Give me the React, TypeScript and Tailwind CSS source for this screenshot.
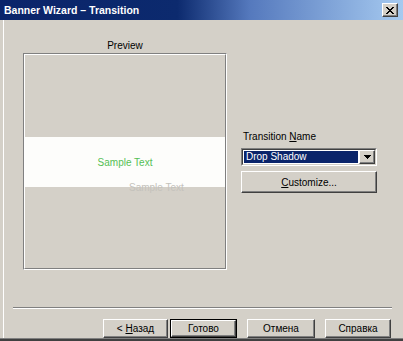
import React from "react";

function RaisedButton({
  children,
  className = "",
}: {
  children: React.ReactNode;
  className?: string;
}) {
  return (
    <div
      className={`flex items-center justify-center border border-t-white border-l-white border-r-[#404040] border-b-[#404040] shadow-[inset_-1px_-1px_0_#808080] bg-[#d4d0c8] ${className}`}
    >
      {children}
    </div>
  );
}

export default function App() {
  return (
    <div className="w-[403px] h-[341px] bg-[#d4d0c8] flex flex-col overflow-hidden font-['Liberation_Sans',Arial,sans-serif] text-[10px] text-black">
      {/* Title bar */}
      <div className="h-[20px] shrink-0 flex items-center pl-[4px] pr-[5px] bg-[linear-gradient(to_right,#0a246a_0%,#0c2a6e_44%,#5579bd_62%,#a6caf0_100%)]">
        <span className="flex-1 text-white font-bold text-[10.5px] leading-none">
          Banner Wizard – Transition
        </span>
        <RaisedButton className="w-[16px] h-[14px]">
          <svg width="8" height="7" viewBox="0 0 8 7" shapeRendering="crispEdges">
            <path
              d="M0 0h2v1h1v1h2V1h1V0h2v1H7v1H6v1H5v1h1v1h1v1h1v1H6V6H5V5H3v1H2v1H0V6h1V5h1V4h1V3H2V2H1V1H0z"
              fill="#000"
            />
          </svg>
        </RaisedButton>
      </div>

      {/* Body */}
      <div className="flex-1 flex flex-col shadow-[inset_3px_0_0_#d4d0c8,inset_4px_0_0_#fff]">
        <div className="flex pt-[19px] pl-[23px]">
          {/* Preview */}
          <div className="w-[204px] flex flex-col">
            <div className="h-[14px] leading-[14px] text-center">Preview</div>
            <div className="h-[217px] border border-t-[#808080] border-l-[#808080] border-r-white border-b-white">
              <div className="relative h-full border border-t-white border-l-white border-r-[#808080] border-b-[#808080] flex flex-col overflow-hidden">
                <div className="h-[82px] bg-[#d4d0c8]" />
                <div className="h-[50px] bg-[#fdfdfb] flex items-center justify-center text-[#55c055]">
                  Sample Text
                </div>
                <div className="flex-1 bg-[#d4d0c8]" />
                <div className="absolute left-[104px] top-[127px] text-[#c4c2bc] leading-[12px]">
                  Sample Text
                </div>
              </div>
            </div>
          </div>

          {/* Right column */}
          <div className="ml-[14px] w-[136px] pt-[91px] flex flex-col">
            <div className="h-[13px] leading-[13px] pl-[2px]">
              Transition <span className="underline">N</span>ame
            </div>
            <div className="mt-[5px] h-[18px] border border-t-[#808080] border-l-[#808080] border-r-white border-b-white">
              <div className="h-full flex border border-t-[#404040] border-l-[#404040] border-r-[#d4d0c8] border-b-[#d4d0c8] bg-white">
                <div className="flex-1 m-[1px] bg-[#0a246a] text-white leading-[12px] pl-[2px]">
                  Drop Shadow
                </div>
                <RaisedButton className="w-[16px] h-full">
                  <svg width="7" height="4" viewBox="0 0 7 4" shapeRendering="crispEdges">
                    <path d="M0 0h7v1H6v1H5v1H4v1H3V3H2V2H1V1H0z" fill="#000" />
                  </svg>
                </RaisedButton>
              </div>
            </div>
            <RaisedButton className="mt-[5px] h-[22px]">
              <span>
                <span className="underline">C</span>ustomize...
              </span>
            </RaisedButton>
          </div>
        </div>

        {/* Separator */}
        <div className="mt-[37px] ml-[13px] w-[379px] h-[2px] border-t border-t-[#808080] border-b border-b-white" />

        {/* Buttons */}
        <div className="mt-[10px] h-[19px] flex pl-[103px]">
          <RaisedButton className="w-[65px] h-full">
            <span>
              &lt; <span className="underline">Н</span>азад
            </span>
          </RaisedButton>
          <div className="ml-[2px] w-[67px] h-full border border-black">
            <RaisedButton className="w-full h-full">Готово</RaisedButton>
          </div>
          <RaisedButton className="ml-[10px] w-[68px] h-full">Отмена</RaisedButton>
          <RaisedButton className="ml-[10px] w-[66px] h-full">Справка</RaisedButton>
        </div>
      </div>

      {/* Bottom edge */}
      <div className="h-[3px] shrink-0 border-t border-t-[#808080] bg-[#404040]" />
    </div>
  );
}
